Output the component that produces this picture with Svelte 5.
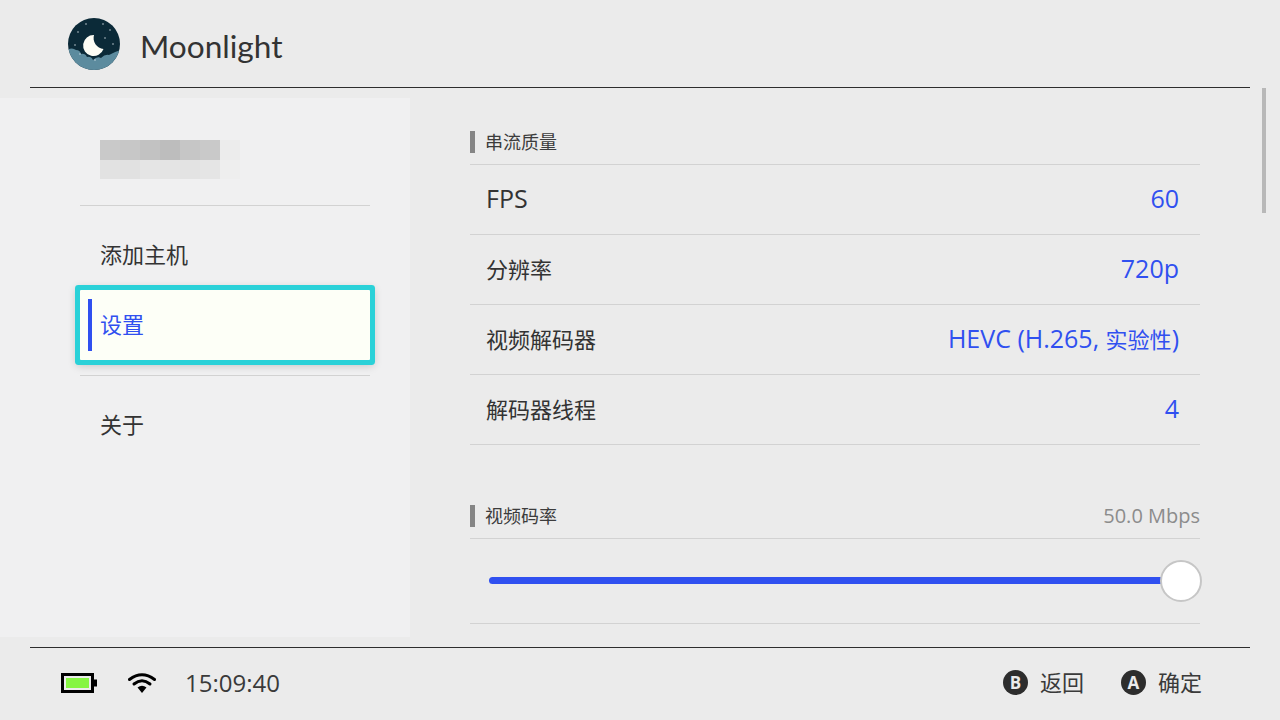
<script lang="ts">
  const blurCells = [
    '#c9c9c9', '#c7c7c7', '#c2c2c2', '#bdbdbd', '#c6c6c6', '#c9c9c9', '#ececec',
    '#e2e2e2', '#e1e1e1', '#e5e5e5', '#e4e4e4', '#e3e3e3', '#e5e5e5', '#eeeeee'
  ];
  const menu = [
    { label: '添加主机', active: false },
    { label: '设置', active: true },
    { label: '关于', active: false }
  ];
  const rows = [
    { label: 'FPS', latin: true, value: '60' },
    { label: '分辨率', value: '720p' },
    { label: '视频解码器', value: 'HEVC (H.265, ', cjk: '实验性', tail: ')' },
    { label: '解码器线程', value: '4' }
  ];
  const stars = [
    [78, 32], [86, 24], [103, 24], [110, 30], [113, 44], [75, 45], [95, 60], [105, 38], [80, 54]
  ];
</script>

<div class="app">
  <header class="top">
    <svg class="logo" width="54" height="54" viewBox="67 17 54 54" aria-hidden="true">
      <defs>
        <clipPath id="disc"><circle cx="94" cy="44" r="26" /></clipPath>
      </defs>
      <circle cx="94" cy="44" r="26" fill="#0b2a38" />
      <g clip-path="url(#disc)">
        <path d="M67 50 Q72 47 76 50 Q80 50 81 54 Q85 53 87 57 Q91 56 93 60 Q97 56 101 58 Q105 54 109 55 Q114 52 121 50 V72 H67 Z" fill="#5c8b9e" />
      </g>
      {#each stars as s}
        <circle cx={s[0]} cy={s[1]} r="0.7" fill="#dfeaf0" />
      {/each}
      <path d="M94 35 A10.500 10.500 0 1 0 103.500 49 A11 11 0 0 1 94 35 Z" fill="#fdfdf5" />
    </svg>
    <h1>Moonlight</h1>
  </header>

  <main class="body">
    <nav class="side">
      <div class="user">
        <div class="blur">
          {#each blurCells as c}
            <span style="background:{c}"></span>
          {/each}
        </div>
      </div>
      <ul class="menu">
        {#each menu as item}
          <li class:active={item.active}>{item.label}</li>
          {#if item.active}<li class="sep" aria-hidden="true"></li>{/if}
        {/each}
      </ul>
    </nav>

    <section class="content">
      <div class="head first">
        <span class="title">串流质量</span>
      </div>
      {#each rows as row}
        <div class="row">
          <span class:latin={row.latin}>{row.label}</span>
          <span class="value latin">{row.value}{#if row.cjk}<span class="cjk">{row.cjk}</span>{row.tail}{/if}</span>
        </div>
      {/each}

      <div class="head second">
        <span class="title">视频码率</span>
        <span class="meta">50.0 Mbps</span>
      </div>
      <div class="slider">
        <div class="track"></div>
        <div class="knob"></div>
      </div>
    </section>

    <div class="scroll"></div>
  </main>

  <footer class="bottom">
    <div class="status">
      <svg width="36" height="20" viewBox="0 0 36 20" aria-hidden="true">
        <rect x="1.500" y="1.500" width="30" height="17" fill="none" stroke="#000" stroke-width="3" />
        <rect x="5" y="5" width="23" height="10" fill="#86f542" />
        <rect x="33" y="6.500" width="3" height="7" fill="#000" />
      </svg>
      <svg class="wifi" width="28" height="20" viewBox="0 0 28 20" aria-hidden="true">
        <path d="M1.500 6.500 Q14 -3 26.500 6.500" fill="none" stroke="#000" stroke-width="3" stroke-linecap="round" />
        <path d="M6 11 Q14 4.500 22 11" fill="none" stroke="#000" stroke-width="3" stroke-linecap="round" />
        <path d="M9.500 14.500 Q14 11 18.500 14.500 L14 20 Z" fill="#000" />
      </svg>
      <span class="clock">15:09:40</span>
    </div>
    <div class="hints">
      <div class="hint"><span class="btn">B</span><span class="lab">返回</span></div>
      <div class="hint"><span class="btn">A</span><span class="lab">确定</span></div>
    </div>
  </footer>
</div>

<style>
  :global(body) {
    margin: 0;
    background: #ebebeb;
  }
  .app {
    width: 1280px;
    height: 720px;
    display: flex;
    flex-direction: column;
    overflow: hidden;
    position: relative;
    background: #ebebeb;
    color: #333;
    font-family: "Open Sans", "Noto Sans CJK SC", sans-serif;
  }

  .top {
    height: 87px;
    margin: 0 30px;
    padding-left: 37px;
    display: flex;
    align-items: center;
    gap: 19px;
    border-bottom: 1px solid #2d2d2d;
    flex: none;
  }
  h1 {
    margin: 5px 0 0;
    font-size: 31.6px;
    font-weight: 400;
    font-family: "Lato", "Open Sans", sans-serif;
    color: #333;
  }

  .body {
    flex: 1;
    display: flex;
    padding-top: 10px;
    min-height: 0;
  }

  .side {
    width: 410px;
    height: 539px;
    background: #f0f0f1;
    padding: 0 40px 0 80px;
    box-sizing: border-box;
    flex: none;
  }
  .user {
    height: 108px;
    padding: 42px 0 0 20px;
    box-sizing: border-box;
    border-bottom: 1px solid #d2d2d2;
  }
  .blur {
    display: grid;
    grid-template-columns: repeat(7, 20px);
    grid-auto-rows: 20px;
    width: 140px;
    height: 39px;
    overflow: hidden;
  }
  .menu {
    list-style: none;
    margin: 14px 0 0;
    padding: 0;
  }
  .menu li {
    height: 70px;
    box-sizing: border-box;
    display: flex;
    align-items: center;
    padding: 0 0 4px 20px;
    font-size: 22px;
    position: relative;
  }
  .menu li.active {
    background: #fdfff7;
    color: #3050f0;
    border-radius: 1px;
    box-shadow: 0 0 0 5px #2ad1d8, 0 2px 8px 4px rgba(0, 0, 0, 0.18);
    z-index: 1;
  }
  .menu li.active::before {
    content: '';
    position: absolute;
    left: 8px;
    top: 9px;
    bottom: 9px;
    width: 4px;
    background: #3050f0;
  }
  .menu li.sep {
    height: 0;
    padding: 0;
    margin: 15px 0 14px;
    border-top: 1px solid #d2d2d2;
  }

  .content {
    width: 730px;
    margin-left: 60px;
    flex: none;
  }
  .head {
    display: flex;
    justify-content: space-between;
    align-items: center;
    height: 22px;
    padding-bottom: 11px;
    border-bottom: 1px solid #d2d2d2;
  }
  .head.first {
    margin-top: 33px;
  }
  .head.second {
    margin-top: 60px;
  }
  .title {
    border-left: 5px solid #858585;
    padding-left: 10px;
    height: 22px;
    line-height: 22px;
    font-size: 18px;
    color: #3c3c3c;
  }
  .meta {
    font-size: 20px;
    color: #8c8c8c;
    line-height: 22px;
  }
  .row {
    height: 65px;
    padding: 0 21px 4px 16px;
    display: flex;
    justify-content: space-between;
    align-items: center;
    border-bottom: 1px solid #d2d2d2;
    font-size: 22px;
  }
  .latin {
    font-size: 25px;
  }
  .value {
    color: #3050f0;
  }
  .cjk {
    font-size: 22px;
  }
  .slider {
    height: 84px;
    border-bottom: 1px solid #d2d2d2;
    position: relative;
  }
  .track {
    position: absolute;
    left: 19px;
    right: 20px;
    top: 38px;
    height: 7px;
    border-radius: 4px;
    background: #3050f0;
  }
  .knob {
    position: absolute;
    right: -2px;
    top: 21px;
    width: 38px;
    height: 38px;
    border: 2px solid #c6c6c6;
    border-radius: 50%;
    background: #fff;
  }

  .scroll {
    position: absolute;
    left: 1262px;
    top: 88px;
    width: 4px;
    height: 125px;
    background: #b8b8b8;
  }

  .bottom {
    height: 73px;
    margin: 0 30px;
    padding: 0 48px 3px 31px;
    box-sizing: border-box;
    border-top: 1px solid #2d2d2d;
    display: flex;
    justify-content: space-between;
    align-items: center;
    flex: none;
  }
  .status {
    display: flex;
    align-items: center;
  }
  .wifi {
    margin-left: 31px;
  }
  .clock {
    margin-left: 29px;
    font-size: 24px;
    color: #3a3a3a;
  }
  .hints {
    display: flex;
    gap: 37px;
  }
  .hint {
    display: flex;
    align-items: center;
    gap: 12px;
    font-size: 22px;
    color: #3a3a3a;
  }
  .lab {
    margin-top: -3px;
  }
  .btn {
    width: 25px;
    height: 25px;
    border-radius: 50%;
    background: #2d2d2d;
    color: #ebebeb;
    font-size: 17px;
    font-weight: 700;
    display: flex;
    align-items: center;
    justify-content: center;
  }
</style>
